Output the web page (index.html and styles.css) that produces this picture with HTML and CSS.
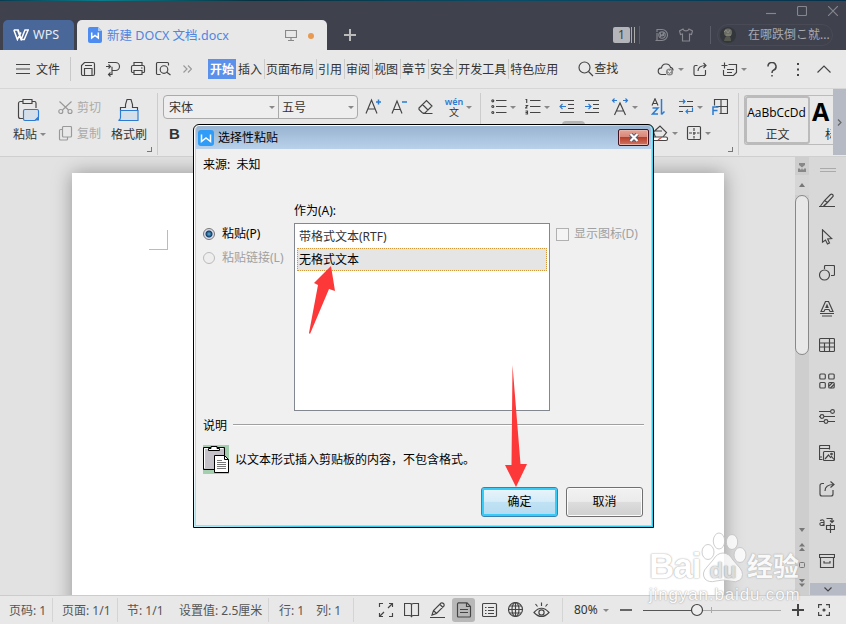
FILE: index.html
```html
<!DOCTYPE html>
<html lang="zh-CN">
<head>
  <meta charset="UTF-8" />
  <meta name="viewport" content="width=device-width, initial-scale=1.0"/>
  <title>新建 DOCX 文档.docx</title>
  <link rel="stylesheet" href="styles.css">
</head>
<body>

<div class="app">

  <div class="titlebar">
    <div class="tab tab-home">
      <svg class="ico logo" width="16" height="12" viewBox="0 0 16 12"><path d="M.8 1h4.400l3 9.400L12 1h3.200l-4 9.600H8L4.600 1M.8 1l3.600 9.600L8 3.400"/></svg>
      <span>WPS</span>
    </div>
    <div class="tab tab-doc">
      <svg width="14" height="16" viewBox="0 0 14 16"><path fill="#4f8cf0" d="M2 0h8l4 4v10a2 2 0 0 1-2 2H2a2 2 0 0 1-2-2V2a2 2 0 0 1 2-2z"/><path fill="#a9c8fa" d="M10 0l4 4h-4z"/><path fill="none" stroke="#fff" stroke-width="1.5" d="M3.700 5.500v5.500L7 8.500l3.300 2.500V5.500"/></svg>
      <span class="doc-name">新建 DOCX 文档.docx</span>
      <svg class="ico screen" width="12" height="12" viewBox="0 0 12 12"><path d="M.5 1.500h11v7h-11zM6 8.500v3M3 11.500h6"/></svg>
      <i class="dot"></i>
    </div>
    <svg class="ico plus" width="12" height="12" viewBox="0 0 12 12"><path d="M6 0v12M0 6h12"/></svg>
    <div class="title-right">
      <div class="win-controls">
        <svg class="ico" width="10" height="10" viewBox="0 0 10 10"><path d="M0 7.500h10"/></svg>
        <svg class="ico" width="10" height="10" viewBox="0 0 10 10"><rect x=".5" y=".5" width="9" height="9" rx="1"/></svg>
        <svg class="ico" width="10" height="10" viewBox="0 0 10 10"><path d="M0 0l10 10M10 0L0 10"/></svg>
      </div>
      <div class="account">
        <span class="badge">1</span>
        <i class="bars"></i>
        <i class="sep"></i>
        <svg class="ico docer" width="14" height="14" viewBox="0 0 14 14"><path d="M2 4V1.500h5a5.500 5.500 0 0 1 0 11H2V5"/><path d="M.5 12.500H2"/><circle cx="7" cy="7" r="3.200"/><path d="M5.500 9V6l1.500 2 1.500-3v3"/></svg>
        <svg class="ico shirt" width="14" height="14" viewBox="0 0 14 14"><path d="M4 1C5 3.500 9 3.500 10 1l3.500 2-1 3.500-2-.5v7h-7V6l-2 .5L.5 3z"/></svg>
        <i class="sep sep-user"></i>
        <div class="user">
          <svg width="16" height="16" viewBox="0 0 16 16"><circle cx="8" cy="8" r="8" fill="#33363a"/><circle cx="8" cy="5.500" r="4" fill="#6b6d64"/><path d="M4 14q1-5 4-5t3 5" fill="#55584f"/><path d="M4 5l2-2 2 3 2-3M6 8h5" stroke="#8a8c82" fill="none"/></svg>
          <span>在哪跌倒こ就...</span>
        </div>
      </div>
    </div>
  </div>

  <div class="menubar">
    <svg class="ico hamburger" width="14" height="10" viewBox="0 0 14 10"><path d="M0 .5h14M0 5h14M0 9.500h14"/></svg>
    <span class="file">文件</span>
    <div class="quick">
      <svg class="ico" width="16" height="16" viewBox="0 0 16 16"><path d="M1.500 13V4.500l3-3h8.500a1.500 1.500 0 0 1 1.500 1.500v10a1.500 1.500 0 0 1-1.500 1.500H3a1.500 1.500 0 0 1-1.500-1.500zM4.500 14V7.500h7.500V14M5 4.500h7"/></svg>
      <svg class="ico" width="16" height="16" viewBox="0 0 16 16"><path d="M3 1.500h7.500a3.800 3.800 0 0 1 0 8H7V5.800M7 9v4.500H3.500M5.500 11.500l-2 2 2 2M1 5.500h3.500M3.500 3.500l2 2-2 2"/></svg>
      <svg class="ico" width="16" height="16" viewBox="0 0 16 16"><path d="M4 4.500v-3h8v3M4 11.500H2.500a1 1 0 0 1-1-1V6a1.500 1.500 0 0 1 1.500-1.500h10A1.500 1.500 0 0 1 14.500 6v4.500a1 1 0 0 1-1 1H12M4 9.500h8v4H4zM11 7h1.500"/></svg>
      <svg class="ico" width="16" height="16" viewBox="0 0 16 16"><path d="M5.500 13.500h-3a1 1 0 0 1-1-1v-10a1 1 0 0 1 1-1h10a1 1 0 0 1 1 1v2M11.500 11l4 3"/><circle cx="9" cy="8.500" r="3.800"/></svg>
      <svg class="ico faint" width="9" height="8" viewBox="0 0 9 8"><path d="M.5.5L4 4 .5 7.500M5 .5L8.500 4 5 7.500"/></svg>
    </div>
    <div class="ribbon-tabs">
      <span class="active">开始</span><span>插入</span><span>页面布局</span><span>引用</span><span>审阅</span><span>视图</span><span>章节</span><span>安全</span><span>开发工具</span><span>特色应用</span>
    </div>
    <svg class="ico find-icon" width="16" height="16" viewBox="0 0 16 16"><circle cx="6.500" cy="6.500" r="5.500"/><path d="M10.500 10.500L15 15"/></svg>
    <span class="find">查找</span>
    <div class="menu-right">
      <svg class="ico" width="18" height="14" viewBox="0 0 18 14"><path d="M9 12.500H4.500a3.300 3.300 0 0 1 0-6.600 4.600 4.600 0 0 1 9-.5 3 3 0 0 1 2.500 3"/><circle cx="12.500" cy="10" r="3.600" fill="#8c8c8c" stroke="none"/><path stroke="#eee" d="M11 8.500l3 3m0-3l-3 3"/></svg>
      <i class="caret"></i>
      <svg class="ico share" width="14" height="14" viewBox="0 0 14 14"><path d="M4.500 3.500h-2a1.500 1.500 0 0 0-1.500 1.500v7a1.500 1.500 0 0 0 1.500 1.500h8.500a1.500 1.500 0 0 0 1.500-1.500V8M5 9q0-5.500 8-5.500M10.500 1L13 3.500 10.500 6"/></svg>
      <svg class="ico ann" width="17" height="15" viewBox="0 0 17 15"><path d="M7.500 2.500h8v8l-3 3h-9a1 1 0 0 1-1-1V8M3.500.5v6M.5 3.500h6M6 7.500h7M6 10.500h5"/></svg>
      <i class="caret"></i>
      <svg class="ico help" width="10" height="15" viewBox="0 0 10 15"><path d="M1 4.500a4 4 0 1 1 5.500 3.700Q5 9 5 11M5 13v1.500"/></svg>
      <svg class="more" width="4" height="13" viewBox="0 0 4 13"><path fill="#444" d="M1 0h2v2H1zM1 5.500h2v2H1zM1 11h2v2H1z"/></svg>
      <svg class="ico fold" width="14" height="8" viewBox="0 0 14 8"><path d="M.5 7.500L7 1l6.500 6.500"/></svg>
    </div>
  </div>

  <div class="ribbon">
    <div class="clip">
      <div class="big-btn paste">
        <svg class="ico" width="24" height="24" viewBox="0 0 24 24"><path d="M6 3.500H3.500a2 2 0 0 0-2 2v13a2 2 0 0 0 2 2H6M15 3.500h2.500a1.500 1.500 0 0 1 1.500 1.500v5M6 1.500h9v4H6z"/><path stroke="#2a7bd1" fill="#d5dfea" d="M6.500 13q0-1.500 1.500-1.500h12q1.500 0 1.500 1.500v6l-3.500 3.500H8q-1.500 0-1.500-1.500z"/><path fill="#2a7bd1" stroke="none" d="M22 18.500v4h-4z"/></svg>
        <span>粘贴<i class="caret"></i></span>
      </div>
      <div class="small-btns">
        <div><svg class="ico faint" width="15" height="15" viewBox="0 0 15 15"><circle cx="2.800" cy="11.500" r="2"/><circle cx="12" cy="11.500" r="2"/><path d="M1.500 1.500l9 8.500M13.500 1.500l-9 8.500"/></svg><span>剪切</span></div>
        <div><svg class="ico faint" width="15" height="15" viewBox="0 0 15 15"><rect x="4.500" y=".5" width="9" height="10.500" rx="1"/><path d="M4.500 3.500h-2a1 1 0 0 0-1 1v8.500a1 1 0 0 0 1 1h6a1 1 0 0 0 1-1v-2"/></svg><span>复制</span></div>
      </div>
      <div class="big-btn brush">
        <svg class="ico" width="22" height="24" viewBox="0 0 22 24"><path fill="#d5dfea" stroke="none" d="M2 13h18v9H2z"/><path d="M2.500 12.500v-3h5V6.500L9 1.500h4l1.500 5v3h5v3"/><path stroke="#2a7bd1" d="M2.500 12.500h17.500v10H.5q2-1 2-3z"/></svg>
        <span>格式刷</span>
      </div>
      <i class="corner"></i>
    </div>

    <div class="font-group">
      <div class="row">
        <div class="font-box">
          <span class="font-name">宋体<i class="caret"></i></span>
          <span class="font-size">五号<i class="caret"></i></span>
        </div>
        <svg class="ico a-plus" width="17" height="18" viewBox="0 0 17 18"><path d="M1 15.500L6.500 2 12 15.500M3 11h7"/><path stroke="#2a7bd1" stroke-width="1.500" d="M13.500 1.500v5M11 4h5"/></svg>
        <svg class="ico a-minus" width="17" height="18" viewBox="0 0 17 18"><path d="M1 15.500L6 3 11 15.500M3 11.500h6"/><path stroke="#2a7bd1" stroke-width="1.500" d="M11 4h5"/></svg>
        <svg class="ico eraser" width="16" height="16" viewBox="0 0 16 16"><path d="M1 9l7.500-7.500 5.500 5.500-7 7H4.500L1 10.500zM4.500 5.500L10 11M5 14.500h9.500"/></svg>
        <div class="pinyin"><b>wén</b><span>文</span></div>
        <i class="caret"></i>
      </div>
      <div class="row"><span class="bold">B</span></div>
    </div>

    <div class="para-group">
      <div class="row">
        <svg class="ico" width="16" height="16" viewBox="0 0 16 16"><path d="M5 1.500h10.500M5 7.500h10.500M5 13.500h10.500"/><circle cx="1.800" cy="1.800" r="1"/><circle cx="1.800" cy="7.500" r="1"/><circle cx="1.800" cy="13.500" r="1"/></svg>
        <i class="caret c1"></i>
        <svg class="ico g1" width="16" height="16" viewBox="0 0 16 16"><path d="M5 1.500h10.500M5 7.500h10.500M5 13.500h10.500M.5.5h1.200v3.500M.5 6.500h2l-2 2.500h2M.5 12h2v3h-2m0-1.500h2"/></svg>
        <i class="caret c1"></i>
        <svg class="ico g1" width="16" height="16" viewBox="0 0 16 16"><path d="M1 1.500h14M9 5.500h6M9 9.500h6M1 13.500h14"/><path stroke="#2a7bd1" d="M7 7.500H1M3.500 5L1 7.500 3.500 10"/></svg>
        <svg class="ico g2" width="16" height="16" viewBox="0 0 16 16"><path d="M1 1.500h14M9 5.500h6M9 9.500h6M1 13.500h14"/><path stroke="#2a7bd1" d="M1 7.500h6M4.500 5L7 7.500 4.500 10"/></svg>
        <svg class="ico g3" width="18" height="18" viewBox="0 0 18 18"><path d="M3.500 17L9 5l5.500 12M5.500 13h7"/><path stroke="#2a7bd1" d="M6 2.500H1.500M3.500.5l-2 2 2 2M12 2.500h4.500M14.500.5l2 2-2 2"/></svg>
        <i class="caret c2"></i>
        <svg class="ico g4" width="14" height="18" viewBox="0 0 14 18"><path d="M1 7.500L4 .8l3 6.700M2 5.500h4"/><path stroke="#2a7bd1" stroke-width="1.500" d="M1.500 10H7l-5.500 6H7M10.500 1v15.500M13.500 13.500L10.500 16.500"/></svg>
        <svg class="ico g5" width="16" height="16" viewBox="0 0 16 16"><path d="M9 2.500h6M1 7.500h14M1 12.500h4"/><path stroke="#2a7bd1" d="M1 2.500h6M5 .5l2 2-2 2M14.500 8.500v4H8M10 10.500l-2 2 2 2"/></svg>
        <i class="caret c2"></i>
        <svg class="ico g7" width="16" height="16" viewBox="0 0 16 16"><path d="M2.500 6.500v-6h13v14h-8M9 .5v14M4 7.500h11.500"/><path stroke="#2a7bd1" stroke-width="1.500" d="M1 16V8h5.500M1 11.500h4.500"/></svg>
      </div>
      <div class="row row-2">
        <svg class="ico" width="17" height="17" viewBox="0 0 17 17"><path d="M1.500 7L8 1l6.500 6.500-4 5H3.500zM2 6h8"/><rect x=".5" y="12" width="15" height="3.500" rx="1.500" fill="#fff"/><path stroke="#e0493a" d="M6 15l4-3"/></svg>
        <i class="caret c3"></i>
        <svg class="ico g6" width="16" height="16" viewBox="0 0 16 16"><rect x="1.500" y="1.500" width="13" height="13" rx="1"/><path stroke-dasharray="3 1" d="M8 3v10.500M3 8h10.500"/></svg>
        <i class="caret c3"></i>
      </div>
      <i class="corner"></i>
    </div>

    <div class="styles">
      <div class="style-tile"><span class="sample">AaBbCcDd</span><span>正文</span></div>
      <div class="style-next"><b>A</b><span>标</span></div>
    </div>
    <div class="gallery-more"><svg class="ico" width="5" height="7" viewBox="0 0 5 7"><path d="M1 .5l3 3-3 3"/></svg></div>
  </div>

  <div class="workspace">
    <div class="canvas"><div class="page"><i class="margin-mark"></i></div></div>
    <div class="scrollbar">
      <svg width="10" height="9" viewBox="0 0 10 9"><path fill="#888" d="M2 0h6v2L5 4.500 2 2zM1 5.500h2v1h1.500v-1h1v1H7v-1h2V9H1z"/></svg>
      <div class="arrow-up"><svg width="6" height="4" viewBox="0 0 6 4"><path fill="#777" d="M0 4l3-4 3 4z"/></svg></div>
      <div class="thumb"></div>
      <div class="nav-btns">
        <svg width="6" height="4" viewBox="0 0 6 4"><path fill="#777" d="M0 0h6L3 4z"/></svg>
        <svg width="6" height="8" viewBox="0 0 6 8"><path fill="#777" d="M0 3.500L3 0l3 3.500zM0 8l3-3.500L6 8z"/></svg>
        <svg width="6" height="6" viewBox="0 0 6 6"><rect x=".5" y=".5" width="5" height="5" rx="1" fill="none" stroke="#777"/></svg>
        <svg width="6" height="8" viewBox="0 0 6 8"><path fill="#777" d="M0 0h6L3 3.500zM0 4.500h6L3 8z"/></svg>
      </div>
    </div>
    <div class="sidebar">
      <div class="grip"></div>
      <div class="tool"><svg class="ico" width="16" height="16" viewBox="0 0 16 16"><path d="M0 13.500h16M1.500 13l4-5.500L11.500 1.500q1-.8 2 0t.5 2L8.500 9.500l-4 3.500M5.500 7.500l3 2M5 13l3-3"/></svg></div>
      <div class="tool"><svg class="ico" width="16" height="16" viewBox="0 0 16 16"><path d="M3.500.8v12.400l3-2.200 2 4 2-1-1.800-4 4-.5z"/></svg></div>
      <div class="tool"><svg class="ico" width="16" height="16" viewBox="0 0 16 16"><path d="M5.500 4V1.500a1 1 0 0 1 1-1h8a1 1 0 0 1 1 1v8a1 1 0 0 1-1 1H12"/><circle cx="5.500" cy="10" r="5"/></svg></div>
      <div class="tool"><svg class="ico" width="16" height="16" viewBox="0 0 16 16"><path d="M2 10.500L6.500.5h3L14 10.500h-3L10 8.500H6l-1 2zM7 6.500h2L8 4zM1 12.500h14M3 15h10"/></svg></div>
      <div class="tool"><svg class="ico" width="16" height="16" viewBox="0 0 16 16"><rect x=".5" y="1.500" width="15" height="13" rx="1"/><path d="M.5 6h15M.5 10h15M5.500 6v8.500M10.500 1.500v13"/></svg></div>
      <div class="tool"><svg class="ico" width="16" height="16" viewBox="0 0 16 16"><rect x=".8" y="1" width="5.500" height="5" rx="1"/><rect x="9.700" y="1" width="5.500" height="5" rx="1"/><rect x=".8" y="9.500" width="5.500" height="5.500" rx="1"/><rect x="9.700" y="9.500" width="5.500" height="5.500" rx="1"/><path d="M10 13l3.500-3.500M11.500 15l3.500-3.500"/></svg></div>
      <div class="tool"><svg class="ico" width="16" height="16" viewBox="0 0 16 16"><path d="M0 2.500h11.500M0 7.500h1M5 7.500h11M0 12.500h5M9 12.500h7"/><circle cx="13.500" cy="2.500" r="1.900"/><circle cx="3" cy="7.500" r="1.900"/><circle cx="7" cy="12.500" r="1.900"/></svg></div>
      <div class="tool"><svg class="ico" width="16" height="16" viewBox="0 0 16 16"><path d="M3.500 14.500H.5v-13q0-1 1-1h9v4M.5 3.500h10M.5 12h2.500"/><rect x="4.500" y="6.500" width="11" height="9" rx="1"/><path d="M6 14l3.500-4 2 2.500 1-1 2.500 3"/><circle cx="12.500" cy="9" r=".8"/></svg></div>
      <div class="tool"><svg class="ico" width="16" height="16" viewBox="0 0 16 16"><path d="M5 2.500H3a2 2 0 0 0-2 2v8.500a2 2 0 0 0 2 2h9a2 2 0 0 0 2-2V9M6 10q0-6.500 9-6.500M11.500.5l3.500 3-3.500 3"/></svg></div>
      <div class="tool"><svg class="ico" width="16" height="16" viewBox="0 0 16 16"><path d="M1 3.500q4-1.500 4 1V9M5 5.500H2.500Q.8 5.700.8 7 1 8.500 2.500 8.500 4.500 8.500 5 7M7.500 1.500H13v4M11 3.500l2 2 2-2M7.500 8.500h8v4h-8zM11.500 6.500v9.500"/></svg></div>
      <div class="tool"><svg class="ico" width="16" height="16" viewBox="0 0 16 16"><path d="M.5 1.500h15v3H.5zM1.500 4.500v10h13v-10M5 8v2h6V8"/></svg></div>
      <div class="side-more"><svg class="ico" width="8" height="5" viewBox="0 0 8 5"><path d="M.5.5L4 4 7.500.5"/></svg></div>
    </div>
  </div>

  <div class="statusbar">
    <span class="st st-1">页码: 1</span>
    <span class="st st-2">页面: 1/1</span>
    <span class="st st-3">节: 1/1</span>
    <span class="st st-4">设置值: 2.5厘米</span>
    <span class="st st-5">行: 1</span>
    <span class="st st-6">列: 1</span>
    <div class="views">
      <span><svg class="ico" width="16" height="16" viewBox="0 0 16 16"><path d="M1.500 5V1.500H5M11 1.500h3.500V5M14.500 11v3.500H11M5 14.500H1.500V11M14 2l-4 4M2 14l4-4"/></svg></span>
      <span><svg class="ico" width="16" height="16" viewBox="0 0 16 16"><path d="M7.500 2.500Q7.500 1.500 6 1.500H.5v12h5q1.500 0 2 1 .5-1 2-1h5v-12h-5Q7.500 1.500 7.500 2.500zM7.500 2.500V15"/></svg></span>
      <span><svg class="ico" width="16" height="16" viewBox="0 0 16 16"><path d="M0 15.500h15M2 13l1.500-4.500L11 1q1.500-.5 2.500.5t.5 2.500l-7.500 7.500zM3.500 8.500l3 3M10 2.500l3 3"/></svg></span>
      <span class="on"><svg class="ico" width="16" height="16" viewBox="0 0 16 16"><path d="M2 .8h9l3.500 3.700V14q0 1-1 1h-11q-1 0-1-1V2q0-1.200 1-1.200M10.500 1v3.500h4M4 7.500h8M4 10.500h8"/></svg></span>
      <span><svg class="ico" width="16" height="16" viewBox="0 0 16 16"><rect x=".5" y="1.500" width="14" height="13" rx="1"/><path d="M3 5.500h1.500M6 5.500h6M3 8.500h1.500M6 8.500h6M3 11.500h1.500M6 11.500h6"/></svg></span>
      <span><svg class="ico" width="16" height="16" viewBox="0 0 16 16"><circle cx="7.500" cy="7.500" r="7"/><ellipse cx="7.500" cy="7.500" rx="3.500" ry="7"/><path d="M7.500.5v14M.5 7.500h14M2 4h11M2 11h11"/></svg></span>
      <span><svg class="ico" width="18" height="16" viewBox="0 0 18 16"><path d="M1 10.500Q8.500 2 16 10.500 8.500 18.500 1 10.500zM8.500.5v3.500M2.500 2l2 2.500M14.500 2l-2 2.500"/><circle cx="8.500" cy="10.500" r="2.600"/></svg></span>
    </div>
    <span class="zoom">80%</span><i class="caret"></i>
    <i class="minus"></i>
    <svg class="slider" width="138" height="14" viewBox="0 0 138 14"><path stroke="#555" d="M0 7.500h49"/><path stroke="#aaa" d="M60 7.500h78M68.500 4v6"/><circle cx="54" cy="7" r="5.500" fill="#eee" stroke="#444" stroke-width="1.200"/></svg>
    <svg class="ico zoom-in" width="12" height="12" viewBox="0 0 12 12"><path d="M6 0v12M0 6h12"/></svg>
    <svg class="ico fit" width="12" height="12" viewBox="0 0 12 12"><path d="M.6 4V.6H4M8 .6h3.400V4M11.400 8v3.400H8M4 11.400H.6V8"/><circle cx="6" cy="6" r="1" fill="#444"/></svg>
  </div>

  <div class="peek"></div>

  <div class="dialog">
    <div class="dialog-inner">
      <div class="dialog-title">
        <svg width="16" height="16" viewBox="0 0 16 16"><rect width="16" height="16" rx="3" fill="#2f9cf7"/><path fill="none" stroke="#fff" stroke-width="1.500" d="M3.500 4.500v7L8 8l4.500 3.500v-7"/></svg>
        <span>选择性粘贴</span>
        <div class="close"><svg width="12" height="9" viewBox="0 0 12 9"><path stroke="#555c70" stroke-width="4" d="M2.500 1L9.500 8M9.500 1L2.500 8"/><path stroke="#fff" stroke-width="2.200" d="M2.500 1L9.500 8M9.500 1L2.500 8"/></svg></div>
      </div>
      <div class="source">来源:&nbsp; 未知</div>
      <div class="options">
        <div class="radios">
          <label><i class="radio checked"></i>粘贴(P)</label>
          <label class="disabled"><i class="radio"></i>粘贴链接(L)</label>
        </div>
        <div class="as">
          <div class="as-label">作为(A):</div>
          <div class="list">
            <div class="item">带格式文本(RTF)</div>
            <div class="item selected">无格式文本</div>
          </div>
        </div>
        <label class="show-icon disabled"><i class="check"></i>显示图标(D)</label>
      </div>
      <div class="legend"><span>说明</span><hr></div>
      <div class="explain">
        <svg width="26" height="29" viewBox="0 0 26 29"><path fill="#a3cfae" d="M0 0h26v29H0z"/><path fill="#c4c2c8" stroke="#000" d="M.5 2.500h21v22H.5z"/><path fill="none" stroke="#fff" d="M1.500 23V3.500H20"/><path fill="#fff" stroke="#000" d="M5.500 5.500V3.500h2.500v-2h6v2h2.500v2z"/><path fill="#fff" stroke="#000" d="M11.500 10.500h10l4 4v13h-14z"/><path fill="none" stroke="#000" d="M21.500 10.500v4h4"/><path stroke="#777" d="M14 15.500h5M14 17.500h9M14 19.500h9M14 21.500h9M14 23.500h9"/></svg>
        <span>以文本形式插入剪贴板的内容，不包含格式。</span>
      </div>
      <div class="buttons">
        <button class="ok">确定</button>
        <button>取消</button>
      </div>
    </div>
  </div>

  <!-- pointers over the dialog -->
  <svg class="pointers" width="846" height="624" viewBox="0 0 846 624"><path fill="#fd3838" d="M331 266l4 25-6-2-19 45-1-1 9-48-4-2zM512.500 365l8 99h6.500l-11 23-11-22h6.500z"/></svg>

  <div class="watermark">
    <div class="wm-top">
      <span class="wm-bai">Bai</span>
      <svg width="46" height="52" viewBox="0 0 46 52"><g fill="#fff" stroke="#c4c4c4"><ellipse cx="7" cy="20" rx="6" ry="7.500"/><ellipse cx="18" cy="9" rx="5.700" ry="8"/><ellipse cx="31" cy="10" rx="5.700" ry="7.500"/><ellipse cx="39" cy="23" rx="6" ry="7.500"/><path d="M22 21q6 0 10 7l7 8q5 7 0 12-4 3-10 1-7-2-14 0-7 2-11-2-4-6 2-12l6-7q4-7 10-7z"/></g><text x="22" y="46" text-anchor="middle" class="wm-du">du</text></svg>
      <span class="wm-jy">经验</span>
    </div>
    <div class="wm-url">jingyan.baidu.com</div>
  </div>
</div>

</body>
</html>
```
FILE: styles.css
```css
* {
  box-sizing: border-box;
}

body {
  margin: 0;
  font-family: "Noto Sans", "Noto Sans CJK SC", sans-serif;
  font-size: 12px;
  line-height: 16px;
  color: #333;
  overflow: hidden;
}

svg {
  display: block;
  flex: none;
}

.app {
  position: relative;
  width: 846px;
  height: 624px;
  display: flex;
  flex-direction: column;
  background: #e8e8e8;
  white-space: nowrap;
  overflow: hidden;
}

.ico {
  fill: none;
  stroke: #444;
  stroke-width: 1.15;
}

.faint {
  stroke: #999;
}

.caret {
  flex: none;
  width: 0;
  height: 0;
  border: 3px solid transparent;
  border-top: 3px solid #888;
  border-bottom: 0;
}

/* title bar */
.titlebar {
  flex: none;
  height: 50px;
  display: flex;
  align-items: flex-end;
  padding-left: 3px;
  background: linear-gradient(90deg, #083c50, #0a7d8c 12%, #06303f 30%, #0a4d66 60%, #06304a) 0 0 / 100% 1px no-repeat, #3f414d;
}

.tab {
  height: 30px;
  display: flex;
  align-items: center;
  border-radius: 5px 5px 0 0;
}

.tab-home {
  width: 71px;
  margin-right: 3px;
  padding-left: 10px;
  gap: 4px;
  background: #4a6799;
  color: #e8ecf4;
  font-size: 12.500px;
}

.logo {
  stroke: #fff;
  stroke-width: 1.500;
}

.tab-doc {
  width: 250px;
  padding-left: 11px;
  background: #e8e8e8;
  color: #4f86e0;
}

.doc-name {
  width: 178px;
  margin-left: 5px;
  padding-top: 2px;
  font-size: 12.500px;
}

.screen {
  stroke: #888;
}

.dot {
  width: 6px;
  height: 6px;
  margin: 1px 0 0 11px;
  border-radius: 50%;
  background: #e89a50;
}

.plus {
  margin: 0 0 9px 17px;
  stroke: #bbb;
  stroke-width: 2;
}

.title-right {
  width: 233px;
  height: 50px;
  margin-left: auto;
}

.title-right .ico {
  stroke: #85868e;
}

.win-controls {
  display: flex;
  justify-content: flex-end;
  gap: 21px;
  height: 23px;
  padding: 6px 8px 0 0;
}

.account {
  display: flex;
  align-items: center;
  height: 23px;
}

.badge {
  width: 17px;
  height: 16px;
  border-radius: 2px;
  background: #b4b5ba;
  color: #4a3a30;
  text-align: center;
}

.bars {
  width: 4px;
  height: 16px;
  margin-left: 1px;
  border-left: 1px solid #aaa;
  border-right: 1px solid #aaa;
}

.sep {
  width: 1px;
  height: 18px;
  margin-left: 4px;
  background: #5a5c67;
}

.docer {
  margin-left: 15px;
}

.shirt {
  margin-left: 10px;
}

.sep-user {
  margin-left: 17px;
}

.user {
  width: 116px;
  height: 22px;
  margin-left: 6px;
  display: flex;
  align-items: center;
  gap: 12px;
  padding-left: 2px;
  border: 1px solid #484a55;
  border-radius: 11px;
  color: #a9aab0;
}

/* menu bar */
.menubar {
  flex: none;
  height: 39px;
  display: flex;
  align-items: center;
  padding-left: 16px;
  border-bottom: 1px solid #d6d6d6;
}

.file {
  width: 35px;
  height: 24px;
  margin-left: 6px;
  line-height: 25px;
  border-right: 1px solid #c8c8c8;
}

.quick {
  width: 137px;
  display: flex;
  align-items: center;
  gap: 9px;
  padding-left: 9px;
}

.quick .faint {
  margin-left: 3px;
}

.ribbon-tabs {
  display: flex;
}

.ribbon-tabs span {
  height: 20px;
  padding: 0 2px 0 1px;
  line-height: 22px;
  border-left: 1px solid #ccc;
}

.ribbon-tabs .active,
.ribbon-tabs .active + span {
  padding-left: 2px;
  border: none;
}

.ribbon-tabs .active {
  background: #5b91ea;
  color: #fff;
  font-weight: bold;
}

.find-icon {
  margin-left: 18px;
}

.menu-right {
  display: flex;
  align-items: center;
  margin-left: 39px;
}

.menu-right .caret {
  margin-left: 3px;
}

.share {
  margin-left: 9px;
}

.ann {
  margin-left: 14px;
}

.help {
  margin-left: 20px;
  stroke-width: 1.500;
}

.more {
  margin-left: 19px;
}

.fold {
  margin-left: 17px;
}

/* ribbon */
.ribbon {
  flex: none;
  height: 68px;
  display: flex;
  border-bottom: 1px solid #cfcfcf;
}

.clip {
  position: relative;
  width: 158px;
  height: 62px;
  margin-top: 4px;
  display: flex;
  border-right: 1px solid #ccc;
}

.big-btn {
  display: flex;
  flex-direction: column;
  gap: 5px;
  padding-top: 5px;
}

.big-btn span {
  display: flex;
  align-items: center;
}

.paste {
  width: 58px;
  padding-left: 13px;
}

.paste svg {
  margin-left: 4px;
}

.paste .caret {
  margin: -2px 0 0 3px;
}

.small-btns {
  width: 53px;
  display: flex;
  flex-direction: column;
  gap: 8px;
  padding-top: 5px;
  color: #aaa;
}

.small-btns div {
  display: flex;
  align-items: center;
  gap: 4px;
}

.small-btns span {
  padding-top: 2px;
}

.brush svg {
  margin-left: 7px;
}

.corner {
  position: absolute;
  right: 5px;
  bottom: 3px;
  width: 5px;
  height: 5px;
  border-right: 1px solid #777;
  border-bottom: 1px solid #777;
}

.font-group {
  width: 323px;
  height: 62px;
  margin-top: 4px;
  padding-left: 5px;
  border-right: 1px solid #ccc;
}

.row {
  display: flex;
  align-items: center;
  height: 28px;
}

.font-box {
  display: flex;
  width: 195px;
  height: 24px;
  border: 1px solid #aaa;
  border-radius: 4px;
  background: #eee;
}

.font-box span {
  display: flex;
  align-items: center;
  justify-content: space-between;
  padding: 1px 3px 0 5px;
}

.font-name {
  width: 115px;
  border-right: 1px solid #aaa;
}

.font-size {
  width: 78px;
}

.font-box .font-size {
  padding-left: 3px;
}

.a-plus {
  margin-left: 7px;
}

.a-minus {
  margin-left: 9px;
}

.eraser {
  margin-left: 10px;
}

.pinyin {
  width: 18px;
  margin: 0 3px 0 11px;
  display: flex;
  flex-direction: column;
  align-items: center;
}

.pinyin b {
  font-size: 9px;
  line-height: 10px;
  font-weight: 600;
  color: #2a7bd1;
}

.pinyin span {
  font-size: 10px;
  line-height: 11px;
}

.bold {
  padding: 0 0 3px 6px;
  font-family: "Liberation Sans", sans-serif;
  font-size: 15px;
  font-weight: bold;
}

.para-group {
  position: relative;
  width: 258px;
  height: 62px;
  margin-top: 4px;
  padding-left: 10px;
  border-right: 1px solid #ccc;
}

.row-2 {
  height: 24px;
  padding-left: 161px;
}

.c1 {
  margin-left: 3px;
}

.c2 {
  margin-left: 3px;
}

.c3 {
  margin-left: 3px;
}

.g1 {
  margin-left: 9px;
}

.g2 {
  margin-left: 9px;
}

.g3 {
  margin-left: 11px;
}

.g4 {
  margin-left: 13px;
}

.g5 {
  margin-left: 13px;
}

.g7 {
  margin-left: 9px;
}

.g6 {
  margin-left: 8px;
}

.styles {
  display: flex;
  width: 89px;
  height: 50px;
  margin: 6px 0 0 5px;
  border: 1px solid #bbb;
  border-right: 0;
  border-radius: 3px 0 0 3px;
  overflow: hidden;
}

.style-tile {
  flex: none;
  width: 65px;
  display: flex;
  flex-direction: column;
  align-items: center;
  gap: 6px;
  padding-top: 7px;
  border: 2px solid #bbb;
  border-radius: 3px;
}

.sample {
  margin-left: -2px;
  font-family: "Open Sans", sans-serif;
  color: #000;
}

.style-next {
  width: 21px;
  display: flex;
  flex-direction: column;
  padding-left: 2px;
  overflow: hidden;
}

.style-next b {
  font-family: "Open Sans", sans-serif;
  font-size: 25px;
  line-height: 31px;
  color: #000;
}

.style-next span {
  padding-left: 13px;
}

.gallery-more {
  width: 13px;
  height: 66px;
  display: flex;
  align-items: center;
  justify-content: center;
  background: #b6bac4;
}

.gallery-more .ico {
  stroke: #666;
}

/* document area */
.workspace {
  flex: none;
  height: 438px;
  display: flex;
  background: #e2e2e2;
}

.canvas {
  width: 795px;
  padding: 16px 71px 0 72px;
  overflow: hidden;
}

.page {
  width: 652px;
  height: 460px;
  padding: 57px 0 0 77px;
  background: #fff;
  box-shadow: 0 0 18px rgba(0, 0, 0, 0.35);
}

.margin-mark {
  display: block;
  width: 19px;
  height: 20px;
  border-right: 1px solid #bbb;
  border-bottom: 1px solid #bbb;
}

.scrollbar {
  width: 14px;
  display: flex;
  flex-direction: column;
  align-items: center;
  padding-top: 6px;
  background: #cecece;
}

.arrow-up {
  width: 14px;
  height: 20px;
  margin-top: 3px;
  padding: 8px 4px;
  background: #d6d6d6;
}

.thumb {
  width: 14px;
  height: 160px;
  border: 1px solid #888;
  border-radius: 7px;
  background: #e8e8e8;
}

.nav-btns {
  display: flex;
  flex-direction: column;
  align-items: center;
  gap: 11px;
  padding-top: 173px;
}

.sidebar {
  width: 37px;
  display: flex;
  flex-direction: column;
  align-items: center;
  background: #d8d8d8;
}

.grip {
  width: 16px;
  height: 4px;
  margin: 11px 0;
  border-top: 1px solid #aaa;
  border-bottom: 1px solid #aaa;
}

.tool {
  height: 36px;
  display: flex;
  align-items: center;
  padding-right: 1px;
}

.side-more {
  width: 36px;
  height: 12px;
  margin: auto 0 0 1px;
  display: flex;
  align-items: center;
  justify-content: center;
  background: #b6bac4;
}

/* status bar */
.statusbar {
  flex: none;
  height: 29px;
  display: flex;
  align-items: center;
  padding-left: 9px;
  border-top: 1px solid #ccc;
  color: #555;
}

.st {
  height: 24px;
  line-height: 26px;
}

.st-1 {
  width: 44px;
  border-right: 1px solid #d4d4d4;
}

.st-2 {
  width: 65px;
  padding-left: 9px;
  border-right: 1px solid #d4d4d4;
}

.st-3 {
  width: 61px;
  padding-left: 9px;
}

.st-4 {
  width: 90px;
  border-right: 1px solid #d4d4d4;
}

.st-5 {
  width: 47px;
  padding-left: 10px;
}

.st-6 {
  width: 38px;
  border-right: 1px solid #d4d4d4;
}

.views {
  width: 209px;
  height: 24px;
  display: flex;
  gap: 3px;
  padding-left: 20px;
  border-right: 1px solid #d4d4d4;
}

.views span {
  flex: none;
  width: 23px;
  display: flex;
  align-items: center;
  justify-content: center;
}

.views .on {
  border-radius: 3px;
  background: #b8b8b8;
}

.zoom {
  width: 29px;
  margin-left: 11px;
  color: #333;
}

.minus {
  width: 12px;
  height: 2px;
  margin: 0 11px;
  background: #666;
}

.slider {
  fill: none;
}

.zoom-in {
  margin-left: 11px;
  stroke-width: 2;
}

.fit {
  margin-left: 14px;
}

.peek {
  position: absolute;
  left: 562px;
  top: 121px;
  width: 23px;
  height: 5px;
  border-radius: 4px 4px 0 0;
  background: #b4b4b4;
}

/* paste special dialog */
.dialog {
  position: absolute;
  left: 193px;
  top: 124px;
  width: 461px;
  height: 404px;
  padding: 1px 1px 1px 1px;
  border: 1px solid #000;
  border-radius: 6px 6px 0 0;
  background: linear-gradient(135deg, #fff 40%, #2bcdee 60%);
  color: #000;
}

.dialog-inner {
  height: 400px;
  display: flex;
  flex-direction: column;
  border: 1px solid #b9d1ea;
  border-top: 0;
  border-radius: 4px 4px 0 0;
  background: #f0f0f0;
  overflow: hidden;
}

.dialog-title {
  flex: none;
  height: 23px;
  display: flex;
  align-items: center;
  gap: 4px;
  padding: 0 2px;
  background: linear-gradient(#99b4d1, #b9d1ea);
}

.dialog-title span {
  padding-top: 1px;
}

.close {
  width: 31px;
  height: 17px;
  margin-left: auto;
  display: flex;
  align-items: center;
  justify-content: center;
  border: 1px solid #431422;
  border-radius: 2px;
  background: linear-gradient(#e6a598, #d98778 45%, #b8402b 50%, #cf7565);
  box-shadow: inset 0 0 0 1px #e8b5aa;
}

.source {
  padding: 8px 0 0 7px;
}

.options {
  display: flex;
  padding: 29px 0 0 7px;
}

.radios {
  width: 91px;
  display: flex;
  flex-direction: column;
  gap: 8px;
  padding-top: 24px;
}

label {
  display: flex;
  align-items: center;
  gap: 7px;
}

.disabled {
  color: #a0a0a0;
}

.radio {
  width: 12px;
  height: 12px;
  border: 1px solid #bbb;
  border-radius: 50%;
  background: #eee;
}

.radio.checked {
  border-color: #777;
  background: radial-gradient(circle, #5fb4de 0, #123c66 3px, #dde 4px);
}

.as-label {
  height: 21px;
  padding-top: 1px;
}

.list {
  width: 256px;
  height: 188px;
  padding: 2px;
  border: 1px solid #828790;
  background: #fff;
}

.item {
  height: 22px;
  padding-left: 2px;
  line-height: 22px;
  color: #333;
}

.item.selected {
  height: 23px;
  padding-left: 1px;
  line-height: 21px;
  border: 1px dotted #d09a3c;
  background: #e5e5e5;
  color: #000;
}

.show-icon {
  height: 16px;
  margin: 24px 0 0 6px;
  gap: 5px;
}

.check {
  width: 13px;
  height: 13px;
  border: 1px solid #b1b1b1;
  background: #f4f4f4;
}

.legend {
  display: flex;
  align-items: center;
  gap: 6px;
  padding: 7px 7px 0;
}

.legend hr {
  flex: 1;
  height: 2px;
  margin: 0 0 2px;
  border: 0;
  border-top: 1px solid #a0a0a0;
  background: #fff;
}

.explain {
  display: flex;
  align-items: center;
  gap: 6px;
  padding: 11px 0 0 7px;
}

.explain span {
  padding-top: 1px;
}

.buttons {
  display: flex;
  justify-content: flex-end;
  gap: 8px;
  padding: 13px 8px 0 0;
}

.buttons button {
  width: 77px;
  height: 30px;
  padding: 0;
  border: 1px solid #707070;
  border-radius: 3px;
  background: linear-gradient(#f2f2f2, #ebebeb 48%, #ddd 50%, #cfcfcf);
  box-shadow: inset 0 0 0 1px #fbfbfb;
  font: inherit;
  color: #000;
}

.buttons .ok {
  border-color: #3c7fb1;
  background: linear-gradient(#eaf5fb, #d5ecf8 48%, #c0e2f4 50%, #b5dbf0);
  box-shadow: inset 0 0 0 2px #35cdf8;
}

.pointers {
  position: absolute;
  left: 0;
  top: 0;
}

/* watermark */
.watermark {
  position: absolute;
  left: 649px;
  top: 532px;
  width: 160px;
  color: #fff;
  font-family: "Liberation Sans", "Noto Sans CJK SC", sans-serif;
  opacity: 0.8;
  text-shadow: 0 0 1px #999, 0 0 2px #aaa;
}

.wm-top {
  display: flex;
  align-items: flex-end;
  height: 52px;
}

.wm-bai {
  width: 52px;
  font-size: 35px;
  line-height: 36px;
  font-weight: bold;
  letter-spacing: -1px;
}

.wm-du {
  font-size: 22px;
  font-weight: bold;
  fill: #ddd;
}

.wm-jy {
  font-size: 26px;
  line-height: 34px;
  font-weight: bold;
}

.wm-url {
  margin-top: 3px;
  font-size: 17px;
  line-height: 16px;
  letter-spacing: 0.850px;
}
```
